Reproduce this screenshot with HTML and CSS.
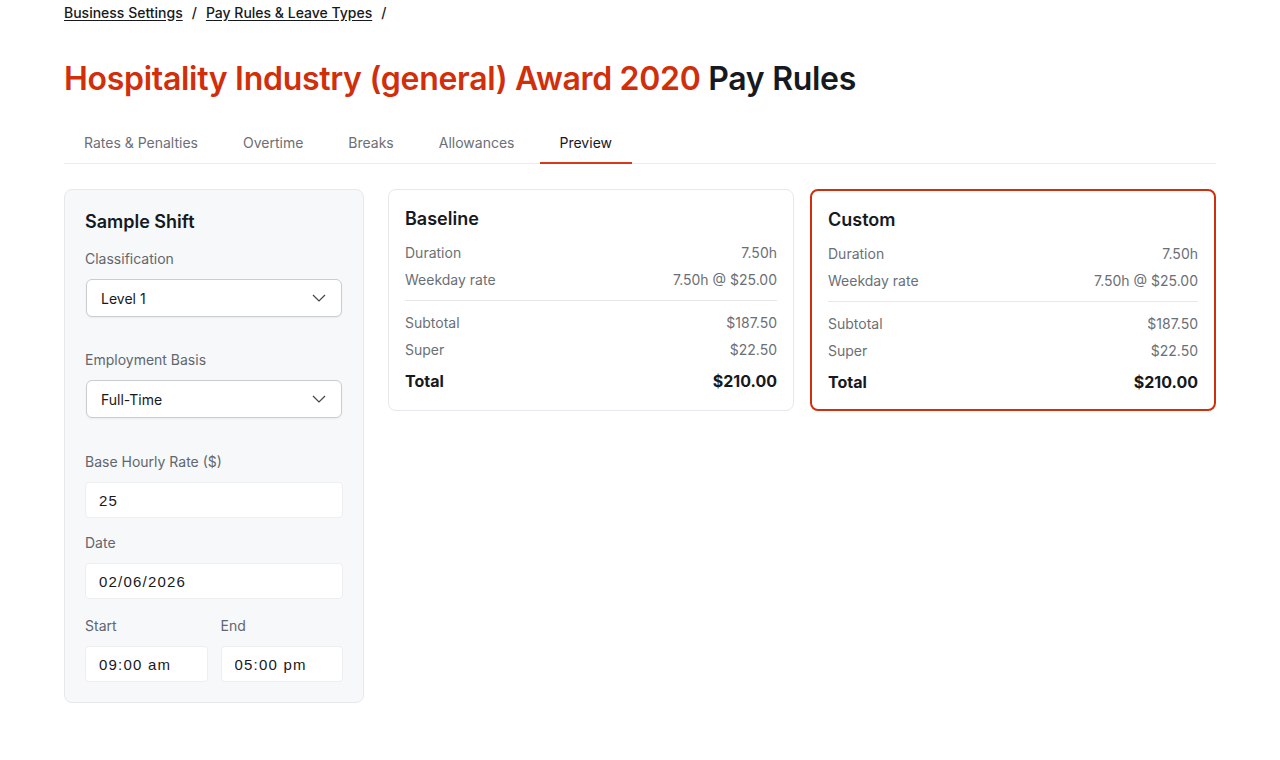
FILE: index.html
```html
<!DOCTYPE html>
<html lang="en">
<head>
  <meta charset="UTF-8">
  <meta name="viewport" content="width=device-width, initial-scale=1">
  <title>Pay Rules - Preview</title>
  <link rel="stylesheet" href="styles.css">
</head>
<body>
  <div class="page">
    <nav class="crumbs">
      <a href="#">Business Settings</a>
      <span class="sep">/</span>
      <a href="#">Pay Rules &amp; Leave Types</a>
      <span class="sep">/</span>
    </nav>

    <h1 class="title"><span class="award">Hospitality Industry (general) Award 2020</span> Pay Rules</h1>

    <div class="tabs">
      <a href="#" class="tab">Rates &amp; Penalties</a>
      <a href="#" class="tab">Overtime</a>
      <a href="#" class="tab">Breaks</a>
      <a href="#" class="tab">Allowances</a>
      <a href="#" class="tab active">Preview</a>
    </div>

    <div class="preview">
      <div class="shift-panel">
        <h2>Sample Shift</h2>

        <div class="field">
          <label>Classification</label>
          <div class="select">
            <span>Level 1</span>
            <svg width="14" height="8" viewBox="0 0 14 8"><path d="M1 1l6 6 6-6" fill="none" stroke="#444" stroke-width="1.2"/></svg>
          </div>
        </div>

        <div class="field basis">
          <label>Employment Basis</label>
          <div class="select">
            <span>Full-Time</span>
            <svg width="14" height="8" viewBox="0 0 14 8"><path d="M1 1l6 6 6-6" fill="none" stroke="#444" stroke-width="1.2"/></svg>
          </div>
        </div>

        <div class="field rate">
          <label>Base Hourly Rate ($)</label>
          <input type="text" value="25">
        </div>

        <div class="field">
          <label>Date</label>
          <input type="text" value="02/06/2026">
        </div>

        <div class="time-row">
          <div class="field">
            <label>Start</label>
            <input type="text" value="09:00 am">
          </div>
          <div class="field">
            <label>End</label>
            <input type="text" value="05:00 pm">
          </div>
        </div>
      </div>

      <div class="results">
        <div class="result">
          <h3>Baseline</h3>
          <div class="row"><span>Duration</span><span>7.50h</span></div>
          <div class="row"><span>Weekday rate</span><span>7.50h @ $25.00</span></div>
          <div class="divider"></div>
          <div class="row"><span>Subtotal</span><span>$187.50</span></div>
          <div class="row"><span>Super</span><span>$22.50</span></div>
          <div class="row total"><span>Total</span><span>$210.00</span></div>
        </div>

        <div class="result custom">
          <h3>Custom</h3>
          <div class="row"><span>Duration</span><span>7.50h</span></div>
          <div class="row"><span>Weekday rate</span><span>7.50h @ $25.00</span></div>
          <div class="divider"></div>
          <div class="row"><span>Subtotal</span><span>$187.50</span></div>
          <div class="row"><span>Super</span><span>$22.50</span></div>
          <div class="row total"><span>Total</span><span>$210.00</span></div>
        </div>
      </div>
    </div>
  </div>
</body>
</html>
```

FILE: styles.css
```css
body {
  margin: 0;
  padding: 0;
  font-family: 'Inter', 'Liberation Sans', sans-serif;
  background-color: #fff;
  color: #16191d;
}

.page {
  width: 1152px;
  margin: 0 auto;
  padding-top: 3px;
}

.crumbs {
  display: flex;
  align-items: center;
  gap: 9px;
  font-size: 14px;
  font-weight: 500;
  height: 18px;
}

.crumbs a {
  color: #16191d;
  text-decoration: underline;
  text-underline-offset: 2px;
}

.crumbs .sep {
  color: #16191d;
}

.title {
  margin: 38px 0 0;
  font-size: 32px;
  font-weight: 600;
  letter-spacing: -0.3px;
  line-height: 40px;
  color: #16191d;
}

.title .award {
  color: #d12f0b;
}

.tabs {
  display: flex;
  gap: 5px;
  margin-top: 25px;
  border-bottom: 1px solid #ececec;
}

.tab {
  padding: 10px 20px 11px;
  font-size: 14px;
  color: #6b6f76;
  text-decoration: none;
  border-bottom: 2px solid transparent;
  margin-bottom: -1px;
}

.tab.active {
  color: #16191d;
  border-bottom-color: #d9381a;
}

.preview {
  display: flex;
  align-items: flex-start;
  gap: 24px;
  margin-top: 25px;
}

.shift-panel {
  box-sizing: border-box;
  width: 300px;
  flex-shrink: 0;
  background: #f7f8fa;
  border: 1px solid #e6e8eb;
  border-radius: 8px;
  padding: 20px 20px 20px;
}

.shift-panel h2 {
  margin: 0 0 16px;
  font-size: 18px;
  font-weight: 600;
  line-height: 24px;
}

.field label {
  display: block;
  font-size: 14px;
  color: #62666d;
  line-height: 18px;
  margin-bottom: 11px;
}

.shift-panel > .field + .field {
  margin-top: 16px;
}

.shift-panel > .field.basis {
  margin-top: 34px;
}

.shift-panel > .field.rate {
  margin-top: 35px;
}

.select {
  display: flex;
  justify-content: space-between;
  align-items: center;
  height: 36px;
  margin: 1px 1px 0;
  padding: 0 15px 0 14px;
  background: #fff;
  border: 1px solid #c9ccd1;
  border-radius: 6px;
  box-shadow: 0 1px 2px rgba(0, 0, 0, 0.05);
  font-size: 14px;
}

.field input {
  display: block;
  box-sizing: border-box;
  width: 100%;
  height: 36px;
  padding: 0 13px;
  background: #fff;
  border: 1px solid #eceef0;
  border-radius: 4px;
  font-family: 'Liberation Sans', sans-serif;
  font-size: 15px;
  letter-spacing: 1.2px;
  color: #16191d;
}

.time-row {
  display: grid;
  grid-template-columns: 1fr 1fr;
  gap: 13px;
}

.shift-panel > .field + .time-row {
  margin-top: 18px;
}

.results {
  flex: 1;
  display: grid;
  grid-template-columns: 1fr 1fr;
  gap: 16px;
}

.result {
  background: #fff;
  border: 1px solid #e6e8eb;
  border-radius: 8px;
  padding: 17px 16px 13px;
}

.result.custom {
  border: 2px solid #d12f0b;
  padding: 17px 16px 11px;
}

.result h3 {
  margin: 0 0 8px;
  font-size: 18px;
  font-weight: 600;
  line-height: 24px;
}

.row {
  display: flex;
  justify-content: space-between;
  font-size: 14px;
  color: #6b6f76;
  line-height: 27px;
}

.divider {
  height: 1px;
  background: #e6e8eb;
  margin: 7px 0 8px;
}

.row.total {
  font-size: 16px;
  font-weight: 700;
  color: #16191d;
  line-height: 32px;
  margin-top: 2px;
}
```
